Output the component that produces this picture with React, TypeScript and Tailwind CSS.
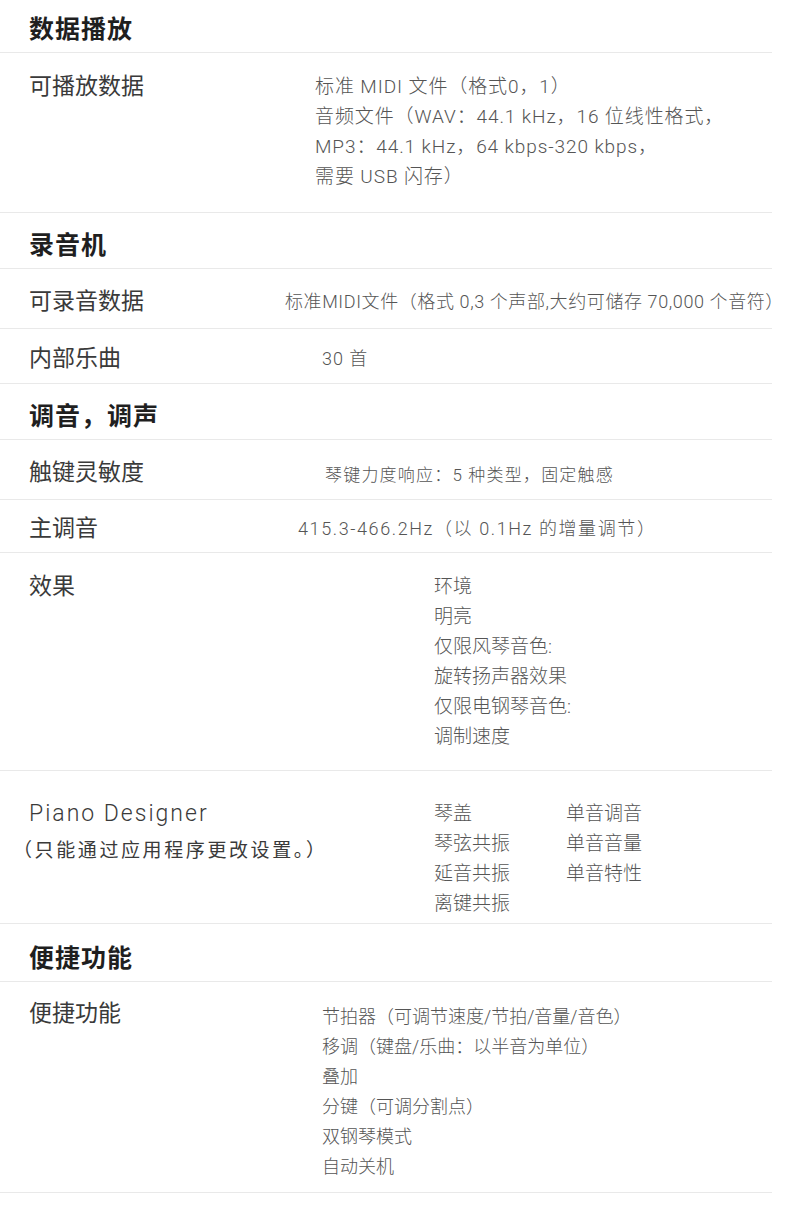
import type { ReactNode } from "react";

function Heading({ children, className }: { children: ReactNode; className: string }) {
  return (
    <div className={`flex items-end border-b border-[#e9e9e9] pb-[7px] pl-[29px] ${className}`}>
      <h2 className="text-[25px] font-bold leading-[30px] tracking-[1px] text-[#1f1f1f]">{children}</h2>
    </div>
  );
}

function Row({
  label,
  labelWidth,
  className,
  children,
}: {
  label: ReactNode;
  labelWidth: string;
  className: string;
  children: ReactNode;
}) {
  return (
    <div className={`flex border-b border-[#e9e9e9] pl-[29px] ${className}`}>
      <div className={`shrink-0 text-[23px] leading-[30px] text-[#3a3a3a] ${labelWidth}`}>{label}</div>
      <div className="text-[19px] font-light leading-[30px] text-[#555]">{children}</div>
    </div>
  );
}

export default function App() {
  return (
    <div className="min-h-[1209px] w-[790px] bg-white font-['Roboto','Noto_Sans_CJK_SC','Noto_Sans',sans-serif]">
      <div className="w-[772px]">
        <Heading className="h-[53px]">数据播放</Heading>
        <Row label="可播放数据" labelWidth="w-[286px]" className="items-start pb-[20px] pt-[19px]">
          <div className="tracking-[0.9px]">
            <p>标准 MIDI 文件（格式0，1）</p>
            <p>音频文件（WAV：44.1 kHz，16 位线性格式，</p>
            <p>MP3：44.1 kHz，64 kbps-320 kbps，</p>
            <p>需要 USB 闪存）</p>
          </div>
        </Row>

        <Heading className="h-[56px]">录音机</Heading>
        <Row label="可录音数据" labelWidth="w-[256px]" className="h-[60px] items-center pt-[6px]">
          <p className="whitespace-nowrap text-[18px] tracking-[0.6px]">
            标准MIDI文件（格式 0,3 个声部,大约可储存 70,000 个音符）
          </p>
        </Row>
        <Row label="内部乐曲" labelWidth="w-[293px]" className="h-[55px] items-center pt-[6px]">
          <p className="text-[18px] tracking-[1px]">30 首</p>
        </Row>

        <Heading className="h-[56px]">调音，调声</Heading>
        <Row label="触键灵敏度" labelWidth="w-[296px]" className="h-[60px] items-center pt-[6px]">
          <p className="pt-[4px] text-[17px] tracking-[1.2px]">琴键力度响应：5 种类型，固定触感</p>
        </Row>
        <Row label="主调音" labelWidth="w-[269px]" className="h-[53px] items-center pt-[6px]">
          <p className="text-[18px] tracking-[1.6px]">415.3-466.2Hz（以 0.1Hz 的增量调节）</p>
        </Row>
        <Row label="效果" labelWidth="w-[405px]" className="items-start pb-[18px] pt-[19px]">
          <p>环境</p>
          <p>明亮</p>
          <p>仅限风琴音色:</p>
          <p>旋转扬声器效果</p>
          <p>仅限电钢琴音色:</p>
          <p>调制速度</p>
        </Row>
        <div className="flex border-b border-[#e9e9e9] pb-[4px] pl-[29px] pt-[28px]">
          <div className="w-[405px] shrink-0">
            <p className="text-[23px] font-light leading-[30px] tracking-[2px] text-[#3a3a3a]">Piano Designer</p>
            <p className="-ml-[16px] mt-[7px] whitespace-nowrap text-[19px] leading-[30px] tracking-[2.6px] text-[#3a3a3a]">
              （只能通过应用程序更改设置。）
            </p>
          </div>
          <div className="flex text-[19px] font-light leading-[30px] text-[#555]">
            <div className="w-[132px]">
              <p>琴盖</p>
              <p>琴弦共振</p>
              <p>延音共振</p>
              <p>离键共振</p>
            </div>
            <div>
              <p>单音调音</p>
              <p>单音音量</p>
              <p>单音特性</p>
            </div>
          </div>
        </div>

        <Heading className="h-[58px]">便捷功能</Heading>
        <Row label="便捷功能" labelWidth="w-[293px]" className="items-start pb-[10px] pt-[17px]">
          <div className="pt-[3px] text-[18px]">
            <p>节拍器（可调节速度/节拍/音量/音色）</p>
            <p>移调（键盘/乐曲：以半音为单位）</p>
            <p>叠加</p>
            <p>分键（可调分割点）</p>
            <p>双钢琴模式</p>
            <p>自动关机</p>
          </div>
        </Row>
      </div>
    </div>
  );
}
